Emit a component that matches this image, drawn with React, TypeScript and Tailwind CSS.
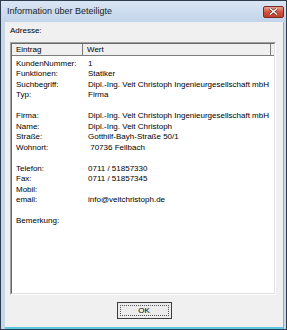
const rows: [string, string][] = [
  ["KundenNummer:", "1"],
  ["Funktionen:", "Statiker"],
  ["Suchbegriff:", "Dipl.-Ing. Veit Christoph Ingenieurgesellschaft mbH"],
  ["Typ:", "Firma"],
  ["", ""],
  ["Firma:", "Dipl.-Ing. Veit Christoph Ingenieurgesellschaft mbH"],
  ["Name:", "Dipl.-Ing. Veit Christoph"],
  ["Straße:", "Gotthilf-Bayh-Straße 50/1"],
  ["Wohnort:", "\u00a070736 Fellbach"],
  ["", ""],
  ["Telefon:", "0711 / 51857330"],
  ["Fax:", "0711 / 51857345"],
  ["Mobil:", ""],
  ["email:", "info@veitchristoph.de"],
  ["", ""],
  ["Bemerkung:", ""],
];

function CloseButton() {
  return (
    <div className="w-[21px] h-[12px] rounded-[2px] border border-[#7a2a22] bg-gradient-to-b from-[#e8a293] via-[#d0533f] to-[#c0402c] flex items-center justify-center">
      <svg width="9" height="7" viewBox="0 0 9 7">
        <path d="M1 0.5 L8 6.5 M8 0.5 L1 6.5" stroke="#5a1a12" strokeWidth="2.6" />
        <path d="M1 0.5 L8 6.5 M8 0.5 L1 6.5" stroke="#ffffff" strokeWidth="1.5" />
      </svg>
    </div>
  );
}

export default function App() {
  return (
    <div className="w-[287px] h-[330px] border border-[#2e3d4d] bg-[#c6d7ea] flex flex-col font-['Liberation_Sans',Arial,sans-serif] text-black">
      <div className="h-[21px] shrink-0 flex items-center justify-between pl-[6px] pr-[2px] bg-gradient-to-b from-[#d8e5f3] to-[#c3d5ea]">
        <span className="text-[9px] leading-none text-[#1b1b1b]">Information über Beteiligte</span>
        <CloseButton />
      </div>
      <div className="flex-1 flex flex-col ml-[4px] mr-[2px] border-r border-b-2 border-[#5cc6e2]">
        <div className="flex-1 bg-[#f0f0f0] flex flex-col pl-[5px] pt-[4px]">
          <div className="text-[8px] leading-[10px]">Adresse:</div>
          <div className="mt-[6px] w-[266px] h-[253px] border border-t-[#a0a0a0] border-l-[#a0a0a0] border-b-white border-r-white">
            <div className="w-full h-full border border-t-[#696969] border-l-[#696969] border-b-[#e3e3e3] border-r-[#e3e3e3] bg-white flex flex-col">
              <div className="h-[12px] shrink-0 flex text-[8px] leading-[11px] bg-[#f0f0f0] border-b border-[#7c7c7c]">
                <div className="w-[71px] pl-[4px] border-r border-[#7c7c7c]">Eintrag</div>
                <div className="w-[188px] pl-[4px] border-r border-[#7c7c7c]">Wert</div>
                <div className="flex-1" />
              </div>
              <div className="pt-[3px] grid grid-cols-[72px_1fr] text-[8px] leading-[10.47px] whitespace-nowrap">
                {rows.map(([k, v], i) => (
                  <div key={i} className="contents">
                    <div className="pl-[4px] h-[10.47px]">{k}</div>
                    <div className="pl-[4px] h-[10.47px]">{v}</div>
                  </div>
                ))}
              </div>
            </div>
          </div>
          <div className="flex justify-center mt-[7px] pr-[5px]">
            <div className="w-[55px] h-[17px] border border-[#3c3c3c] bg-[#ececec] p-[2px]">
              <div className="w-full h-full border border-dotted border-[#555555] flex items-center justify-center text-[8px] leading-none">
                OK
              </div>
            </div>
          </div>
        </div>
      </div>
    </div>
  );
}
